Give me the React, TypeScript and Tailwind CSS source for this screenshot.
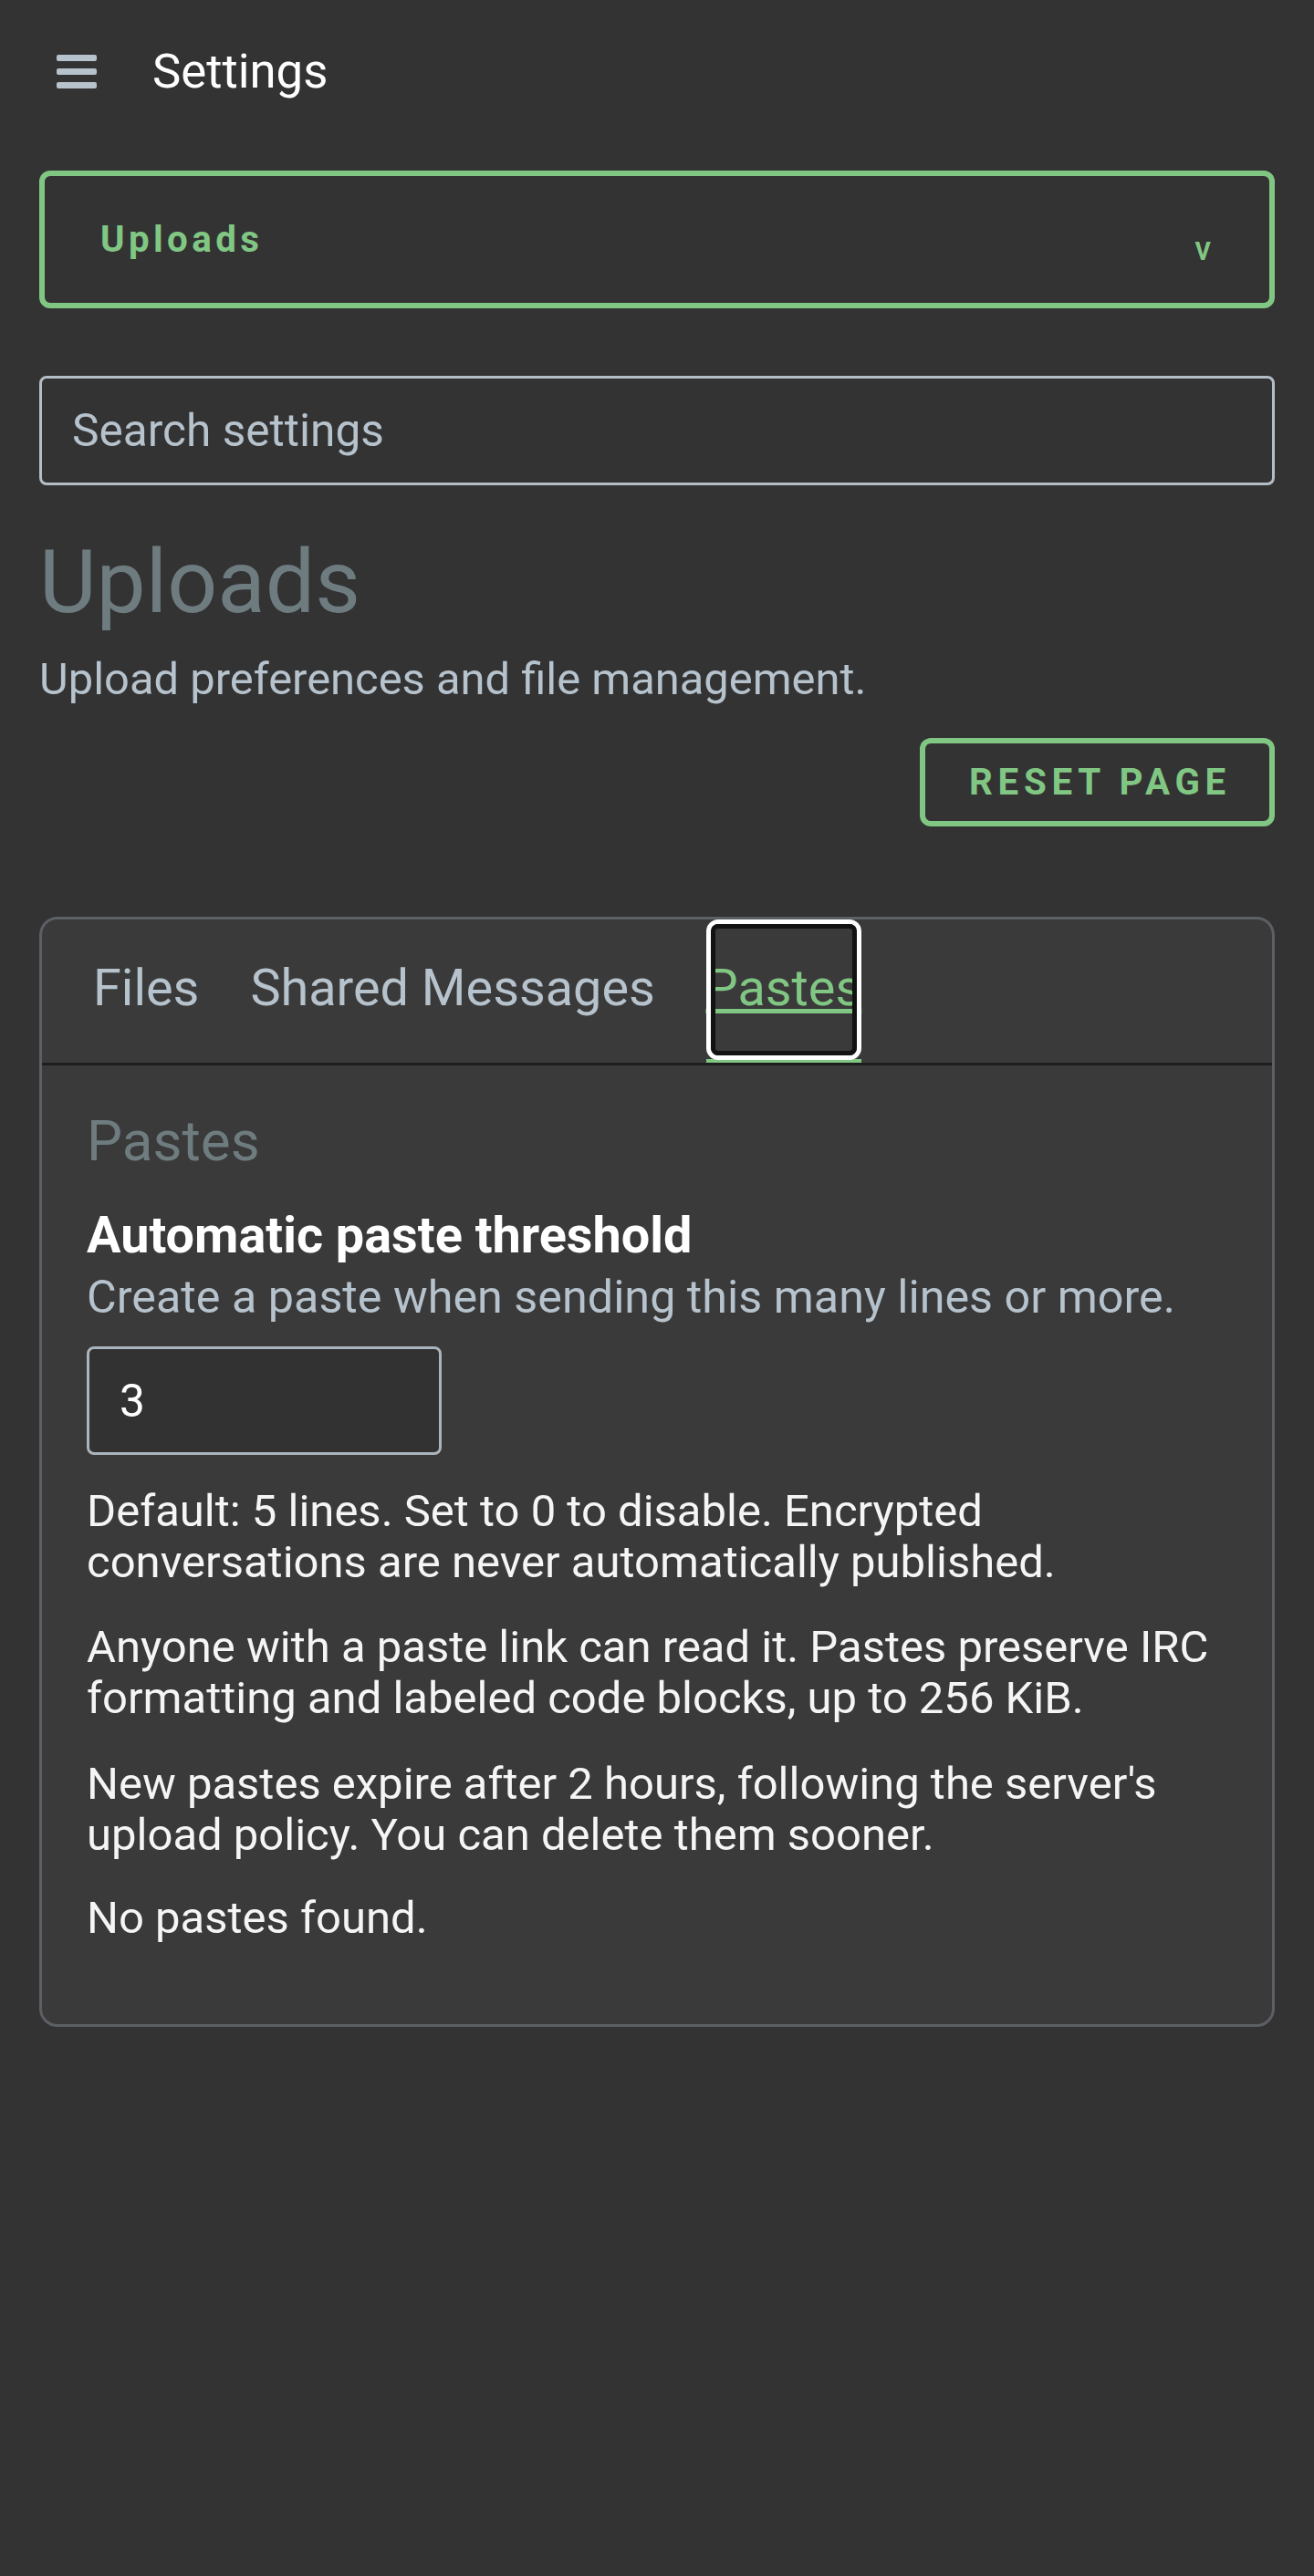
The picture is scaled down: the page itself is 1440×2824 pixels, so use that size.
import React from "react";

export default function App() {
  return (
    <div className="min-h-screen bg-[#333333] px-[43px] font-[Roboto,'Liberation_Sans',sans-serif]">
      {/* Header */}
      <div className="flex h-[156px] items-center pl-[19px]">
        <div className="flex w-[44px] flex-col gap-[8px]">
          <div className="h-[7px] rounded-[2px] bg-[#b6c2cc]" />
          <div className="h-[7px] rounded-[2px] bg-[#b6c2cc]" />
          <div className="h-[7px] rounded-[2px] bg-[#b6c2cc]" />
        </div>
        <div className="ml-[61px] text-[52.7px] leading-[60px] text-white">Settings</div>
      </div>

      {/* Select */}
      <div className="mt-[31px] flex h-[151px] items-center justify-between rounded-[12px] border-[6px] border-[#81c784] bg-[#333333] pl-[61px] pr-[64px]">
        <span className="text-[40.3px] font-bold leading-[48px] tracking-[4.4px] text-[#81c784]">Uploads</span>
        <span className="pt-[20px] text-[36px] font-medium leading-[40px] text-[#81c784]">v</span>
      </div>

      {/* Search */}
      <div className="mt-[74px] flex h-[120px] items-center rounded-[8px] border-[3px] border-[#b4bcc4] pl-[33px]">
        <span className="text-[49.6px] leading-[56px] text-[#b6c2cc]">Search settings</span>
      </div>

      {/* Title */}
      <h1 className="mt-[56px] text-[96.5px] font-normal leading-[100px] text-[#6e7c80]">Uploads</h1>
      <p className="mt-[29px] text-[48.9px] leading-[56px] text-[#b6c2cc]">
        Upload preferences and file management.
      </p>

      <div className="mt-[36px] flex justify-end">
        <div className="flex h-[97px] w-[389px] items-center justify-center rounded-[12px] border-[6px] border-[#81c784] pl-[6px]">
          <span className="text-[40.3px] font-bold leading-[48px] tracking-[5.7px] text-[#81c784]">RESET PAGE</span>
        </div>
      </div>

      {/* Card */}
      <div className="mt-[99px] rounded-[20px] border-[3px] border-[#5c5f63] bg-[#3a3a3a]">
        <div className="flex h-[160px] gap-[58px] border-b-[3px] border-[#1e1e1e] pl-[56px]">
          <div className="flex items-center pb-[8px] text-[55.8px] leading-[64px] text-[#b6c2cc]">Files</div>
          <div className="-ml-[2px] flex items-center pb-[8px] text-[55.8px] leading-[64px] text-[#b6c2cc]">Shared Messages</div>
          <div className="relative -ml-[2px] flex w-[170px] items-center justify-center border-b-[4px] border-[#81c784] pb-[4px]">
            <span className="whitespace-nowrap text-[55.8px] leading-[64px] text-[#81c784] underline decoration-[5px] underline-offset-[4px]">
              Pastes
            </span>
            <div className="pointer-events-none absolute bottom-[-1px] left-0 right-0 top-0 rounded-[13px] border-[5px] border-white">
              <div className="h-full w-full rounded-[8px] border-[5px] border-[#121212]" />
            </div>
          </div>
        </div>

        <div className="px-[49px] pb-[88px] pt-[48px]">
          <div className="text-[62px] leading-[70px] text-[#6e7c80]">Pastes</div>
          <div className="mt-[36px] text-[55.8px] font-bold leading-[64px] text-white">Automatic paste threshold</div>
          <div className="mt-[8px] text-[50.3px] leading-[56px] text-[#b6c2cc]">
            Create a paste when sending this many lines or more.
          </div>
          <div className="mt-[26px] flex h-[119px] w-[389px] items-center rounded-[8px] border-[3px] border-[#aab4bc] bg-[#323232] pl-[33px]">
            <span className="text-[49.6px] leading-[56px] text-white">3</span>
          </div>
          <p className="mt-[34px] text-[49px] leading-[56px] text-[#f5f5f5]">
            Default: 5 lines. Set to 0 to disable. Encrypted conversations are never automatically published.
          </p>
          <p className="mt-[37px] text-[49px] leading-[56px] text-[#f5f5f5]">
            Anyone with a paste link can read it. Pastes preserve IRC formatting and labeled code blocks, up to 256 KiB.
          </p>
          <p className="mt-[38px] text-[49px] leading-[56px] text-[#f5f5f5]">
            New pastes expire after 2 hours, following the server's upload policy. You can delete them sooner.
          </p>
          <p className="mt-[35px] text-[49px] leading-[56px] text-[#f5f5f5]">No pastes found.</p>
        </div>
      </div>
    </div>
  );
}
